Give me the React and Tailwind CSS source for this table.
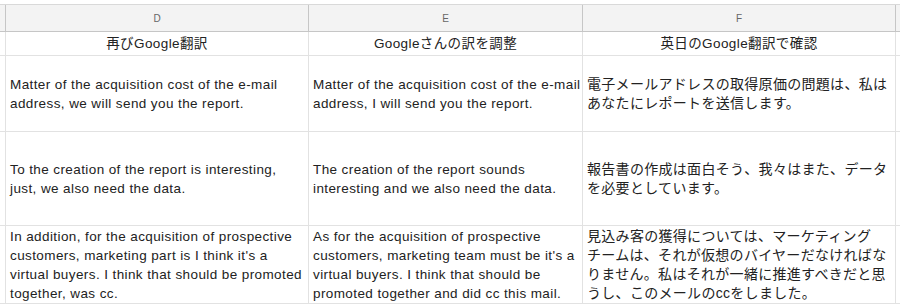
import React from "react";

const rows = [
  {
    h: "h-[24px]",
    center: true,
    cells: [["再びGoogle翻訳"], ["Googleさんの訳を調整"], ["英日のGoogle翻訳で確認"]],
  },
  {
    h: "h-[76px]",
    cells: [
      ["Matter of the acquisition cost of the e-mail", "address, we will send you the report."],
      ["Matter of the acquisition cost of the e-mail", "address, I will send you the report."],
      ["電子メールアドレスの取得原価の問題は、私は", "あなたにレポートを送信します。"],
    ],
  },
  {
    h: "h-[94px]",
    cells: [
      ["To the creation of the report is interesting,", "just, we also need the data."],
      ["The creation of the report sounds", "interesting and we also need the data."],
      ["報告書の作成は面白そう、我々はまた、データ", "を必要としています。"],
    ],
  },
  {
    h: "h-[78px]",
    cells: [
      [
        "In addition, for the acquisition of prospective",
        "customers, marketing part is I think it's a",
        "virtual buyers. I think that should be promoted",
        "together, was cc.",
      ],
      [
        "As for the acquisition of prospective",
        "customers, marketing team must be it's a",
        "virtual buyers. I think that should be",
        "promoted together and did cc this mail.",
      ],
      [
        "見込み客の獲得については、マーケティング",
        "チームは、それが仮想のバイヤーだなければな",
        "りません。私はそれが一緒に推進すべきだと思",
        "うし、このメールのccをしました。",
      ],
    ],
  },
];

export default function App() {
  return (
    <div
      className="w-[900px] h-[306px] bg-white overflow-hidden pt-[4px] text-[#222]"
      style={{ fontFamily: '"Liberation Sans", Arial, "Noto Sans CJK JP", sans-serif' }}
    >
      <div className="grid grid-cols-[6px_303px_274px_313px_4px] border-t border-[#d9d9d9]">
        <div className="h-[27px] bg-[#f3f3f3] border-r border-b border-[#c6c6c6]" />
        {["D", "E", "F"].map((c) => (
          <div
            key={c}
            className="h-[27px] bg-[#f3f3f3] border-r border-b border-[#c6c6c6] flex items-center justify-center text-[10px] text-[#666]"
          >
            {c}
          </div>
        ))}
        <div className="h-[27px] bg-[#f3f3f3] border-b border-[#c6c6c6]" />

        {rows.map((r, i) => (
          <React.Fragment key={i}>
            <div className={`${r.h} border-r border-b border-[#e2e2e2]`} />
            {r.cells.map((lines, j) => (
              <div
                key={j}
                className={`${r.h} border-r border-b border-[#e2e2e2] flex items-center px-[4px] ${
                  r.center ? "justify-center" : ""
                } ${
                  j === 2 && !r.center
                    ? "text-[14px] leading-[19px] tracking-[0.3px]"
                    : "text-[13.5px] leading-[19px] tracking-[0.4px]"
                }`}
              >
                <div className={r.center ? "text-center" : ""}>
                  {lines.map((l, k) => (
                    <div key={k} className="whitespace-nowrap">
                      {l}
                    </div>
                  ))}
                </div>
              </div>
            ))}
            <div className={`${r.h} border-b border-[#e2e2e2]`} />
          </React.Fragment>
        ))}
      </div>
    </div>
  );
}
